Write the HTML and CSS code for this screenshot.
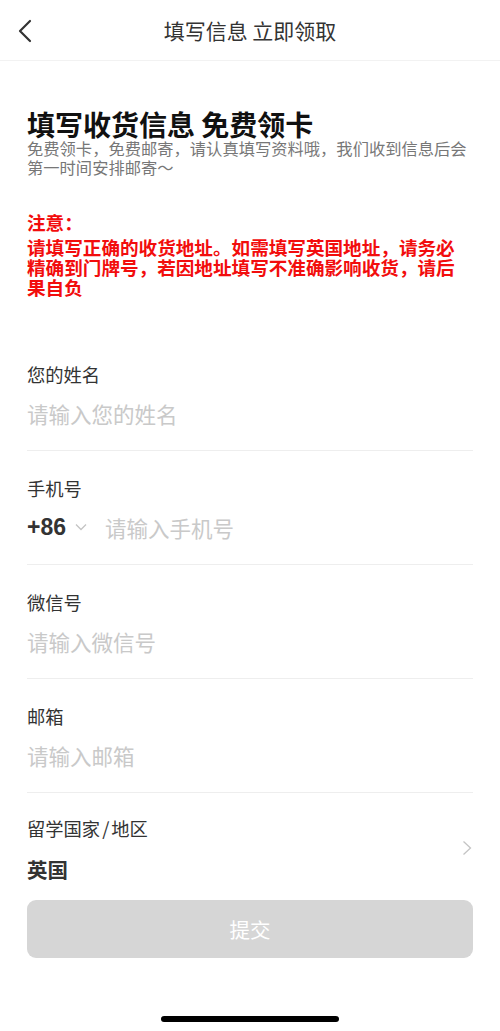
FILE: index.html
```html
<!DOCTYPE html>
<html lang="zh">
<head>
<meta charset="utf-8">
<title>填写信息 立即领取</title>
<link rel="stylesheet" href="styles.css">
</head>
<body>
<div class="page">
  <header class="nav">
    <svg class="nav-back" width="16" height="24" viewBox="0 0 16 24"><path d="M13 2 L3 12 L13 22" fill="none" stroke="#333" stroke-width="2.2" stroke-linecap="round" stroke-linejoin="round"/></svg>
    <div class="nav-title">填写信息 立即领取</div>
  </header>
  <main class="content">
    <h1 class="title">填写收货信息 免费领卡</h1>
    <p class="subtitle">免费领卡，免费邮寄，请认真填写资料哦，我们收到信息后会第一时间安排邮寄～</p>
    <div class="notice">
      <div class="notice-head">注意：</div>
      <div class="notice-body">请填写正确的收货地址。如需填写英国地址，请务必精确到门牌号，若因地址填写不准确影响收货，请后果自负</div>
    </div>
    <form class="form">
      <div class="field">
        <div class="label">您的姓名</div>
        <div class="input"><span class="ph">请输入您的姓名</span></div>
      </div>
      <div class="field">
        <div class="label">手机号</div>
        <div class="input">
          <span class="code">+86</span>
          <svg class="caret" width="12" height="8" viewBox="0 0 12 8"><path d="M1 1.5 L6 6.5 L11 1.5" fill="none" stroke="#c4c4c4" stroke-width="1.3"/></svg>
          <span class="ph">请输入手机号</span>
        </div>
      </div>
      <div class="field">
        <div class="label">微信号</div>
        <div class="input"><span class="ph">请输入微信号</span></div>
      </div>
      <div class="field">
        <div class="label">邮箱</div>
        <div class="input"><span class="ph">请输入邮箱</span></div>
      </div>
      <div class="field field-select">
        <div class="select-text">
          <div class="label">留学国家<span class="slash">/</span>地区</div>
          <div class="value">英国</div>
        </div>
        <svg class="arrow" width="10" height="16" viewBox="0 0 10 16"><path d="M1.5 1.5 L8.5 8 L1.5 14.5" fill="none" stroke="#c4c4c4" stroke-width="1.3"/></svg>
      </div>
      <button type="button" class="submit">提交</button>
    </form>
  </main>
  <div class="home-bar"><span class="home-indicator"></span></div>
</div>
</body>
</html>
```
FILE: styles.css
```css
* { box-sizing: border-box; }
html, body { margin: 0; padding: 0; background: #fff; }
body {
  font-family: "Noto Sans CJK SC", "Noto Sans", sans-serif;
  color: #333;
}
.page { width: 500px; min-height: 1031px; }

.nav {
  height: 61px;
  display: flex;
  align-items: center;
  justify-content: center;
  position: relative;
  border-bottom: 1px solid #f2f2f2;
}
.nav-back { position: absolute; left: 17px; top: 19px; }
.nav-title { font-size: 21px; line-height: 30px; color: #333; margin-top: -1px; }

.content { padding: 0 27px; }
.title {
  margin: 49px 0 0;
  font-size: 28px;
  line-height: 28px;
  font-weight: 700;
  color: #111;
}
.subtitle {
  margin: 1px 0 0;
  max-width: 443px;
  font-size: 16.3px;
  line-height: 19px;
  color: #777;
}
.notice {
  margin-top: 35px;
  color: #f20d0d;
  font-weight: 700;
  font-size: 18.6px;
  line-height: 20px;
}
.notice-head { margin-bottom: 5px; }
.notice-body { max-width: 440px; }

.form { margin-top: 40px; }
.field {
  padding: 25px 0 22px;
  border-bottom: 1px solid #eeeeee;
}
.label { font-size: 18.3px; line-height: 24px; color: #333; }
.slash { margin: 0 2px; }
.input {
  margin-top: 12px;
  height: 30px;
  display: flex;
  align-items: center;
  font-size: 21.5px;
}
.ph { color: #c9c9c9; }
.code { font-weight: 700; color: #333; font-size: 23px; font-family: "Liberation Sans", "Noto Sans CJK SC", sans-serif; }
.caret { margin: 0 18px 0 9px; }

.field-select {
  border-bottom: none;
  padding: 23px 0 16px;
  display: flex;
  align-items: center;
  justify-content: space-between;
}
.value { margin-top: 14px; font-size: 20.5px; line-height: 30px; font-weight: 700; color: #333; }
.arrow { margin-right: 1px; margin-top: -4px; }

.submit {
  display: block;
  width: 100%;
  height: 58px;
  border: none;
  border-radius: 9px;
  background: #d6d6d6;
  color: #fff;
  font-family: inherit;
  font-size: 20.5px;
  padding: 0;
}

.home-bar { display: flex; justify-content: center; margin-top: 58px; }
.home-indicator { width: 178px; height: 6px; border-radius: 3px; background: #000; }
```
